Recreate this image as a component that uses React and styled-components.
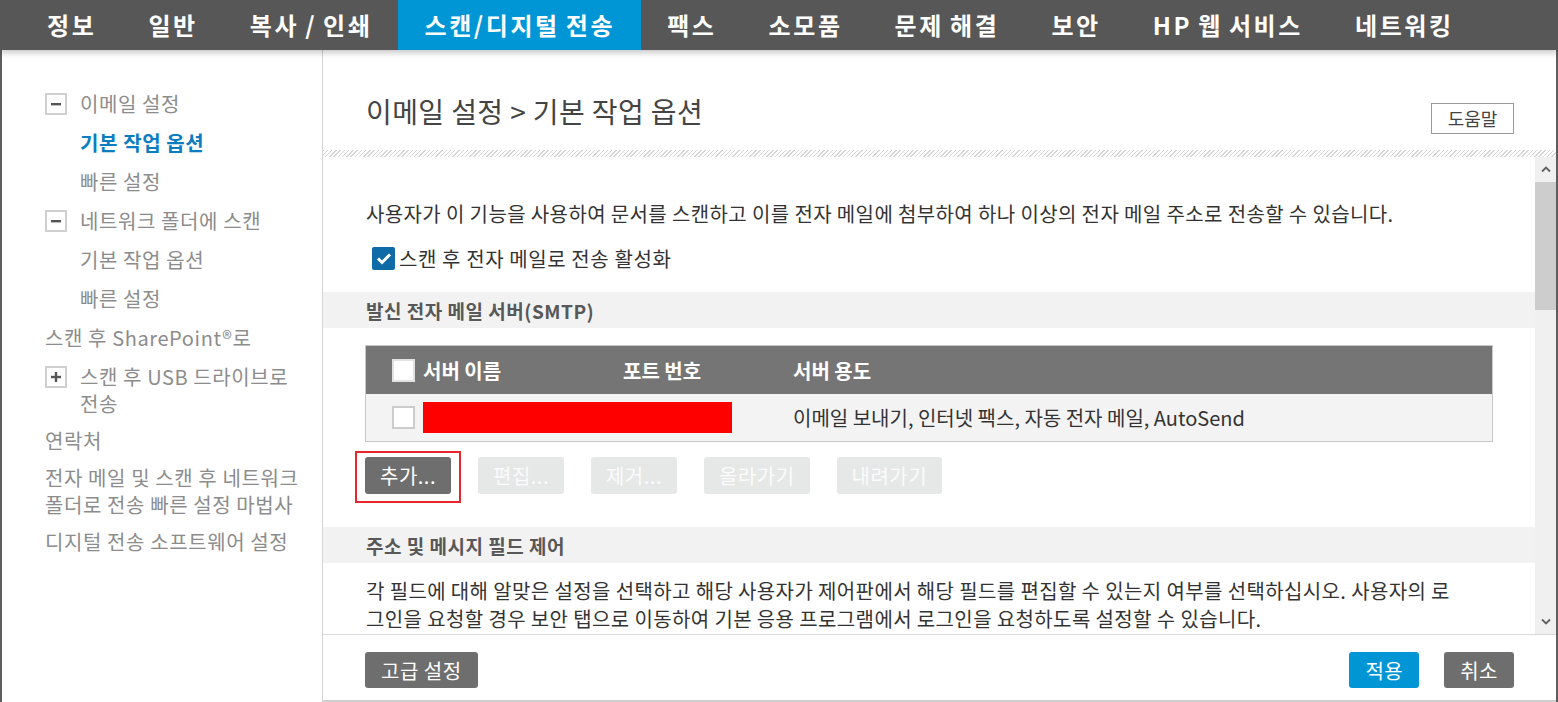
import React from 'react';
import styled, { createGlobalStyle } from 'styled-components';

const GlobalStyle = createGlobalStyle`
  html, body {
    margin: 0;
    padding: 0;
    background: #fff;
  }
  body {
    font-family: "Noto Sans CJK KR", "Noto Sans", sans-serif;
    color: #333;
  }
  * {
    box-sizing: border-box;
  }
`;

const Page = styled.div`
  width: 1558px;
  height: 702px;
  display: flex;
  flex-direction: column;
  overflow: hidden;
`;

const TopNav = styled.nav`
  height: 50px;
  flex: 0 0 50px;
  display: flex;
  padding-left: 21px;
  background: #575757;
  position: relative;
  z-index: 2;
  box-shadow: 0 3px 6px rgba(0, 0, 0, 0.22);
`;

const Tab = styled.div`
  display: flex;
  align-items: center;
  padding: 0 26px 2px 26px;
  font-size: 24px;
  font-weight: 700;
  letter-spacing: 2.6px;
  word-spacing: -2px;
  color: #fff;
  white-space: nowrap;
  background: ${(p) => (p.$active ? '#0096d6' : 'transparent')};
`;

const Body = styled.div`
  flex: 1;
  display: flex;
  min-height: 0;
`;

const Sidebar = styled.aside`
  width: 323px;
  flex: 0 0 323px;
  border-left: 2px solid #5e5e5e;
  border-right: 1px solid #d4d4d4;
  padding: 40px 10px 0 43px;
`;

const SideItem = styled.div`
  display: flex;
  align-items: flex-start;
  padding-left: ${(p) => (p.$indent ? '35px' : '0')};
  margin-bottom: ${(p) => (p.$tight ? 10 : 12)}px;
  font-size: 20px;
  letter-spacing: 0.6px;
  line-height: 27px;
  white-space: nowrap;
  color: ${(p) => (p.$active ? '#0c7dbf' : '#8c8c8c')};
  font-weight: ${(p) => (p.$active ? 700 : 400)};
`;

const ToggleBox = styled.span`
  width: 22px;
  height: 22px;
  flex: 0 0 22px;
  margin: 3px 13px 0 0;
  border: 2px solid #cfcfcf;
  display: flex;
  align-items: center;
  justify-content: center;
`;

const Main = styled.main`
  flex: 1;
  display: flex;
  flex-direction: column;
  min-width: 0;
  border-right: 2px solid #5e5e5e;
`;

const MainHeader = styled.header`
  height: 100px;
  flex: 0 0 100px;
  display: flex;
  justify-content: space-between;
  align-items: flex-start;
  padding: 42px 42px 0 43px;
`;

const Title = styled.h1`
  margin: 0;
  font-size: 28px;
  letter-spacing: 0.4px;
  line-height: 38px;
  font-weight: 400;
  color: #444;
`;

const HelpButton = styled.button`
  margin-top: 11px;
  width: 83px;
  height: 31px;
  border: 1px solid #9a9a9a;
  background: #fff;
  font-family: inherit;
  font-size: 18px;
  line-height: 29px;
  color: #444;
  padding: 0;
`;

const Hatch = styled.div`
  height: 7px;
  flex: 0 0 7px;
  background: repeating-linear-gradient(135deg, #d6d6d6 0 1px, #fff 1px 3px);
`;

const ContentRow = styled.div`
  flex: 1;
  display: flex;
  min-height: 0;
`;

const ScrollArea = styled.div`
  flex: 1;
  overflow: hidden;
  padding-top: 43px;
`;

const ScrollBar = styled.div`
  width: 21px;
  flex: 0 0 21px;
  background: #f0f0f0;
  display: flex;
  flex-direction: column;
`;

const ScrollArrow = styled.div`
  height: 25px;
  flex: 0 0 25px;
  display: flex;
  align-items: center;
  justify-content: center;
`;

const ScrollThumb = styled.div`
  height: 128px;
  flex: 0 0 128px;
  background: #cdcdcd;
`;

const ScrollTrack = styled.div`
  flex: 1;
`;

const Para = styled.p`
  margin: ${(p) => p.$top || 0}px 42px 0 43px;
  font-size: 20px;
  letter-spacing: 0.38px;
  line-height: 28px;
  color: #333;
  white-space: nowrap;
`;

const CheckRow = styled.label`
  display: flex;
  align-items: center;
  gap: 4px;
  height: 28px;
  margin: 16px 0 0 49px;
  font-size: 20px;
  letter-spacing: 0.6px;
  color: #333;
`;

const CheckedBox = styled.span`
  width: 23px;
  height: 23px;
  background: #0e6ba8;
  border-radius: 2px;
  display: flex;
  align-items: center;
  justify-content: center;
`;

const Band = styled.h2`
  margin: ${(p) => p.$top}px 0 0 0;
  height: 36px;
  display: flex;
  align-items: center;
  padding-left: 43px;
  background: #f2f2f2;
  font-size: 19px;
  letter-spacing: 0.5px;
  font-weight: 700;
  color: #585858;
`;

const Table = styled.div`
  margin: 17px 42px 0 42px;
  border: 1px solid #c8c8c8;
`;

const TableRow = styled.div`
  display: grid;
  grid-template-columns: 31px 200px 170px 1fr;
  align-items: center;
  padding-left: 26px;
  height: ${(p) => (p.$head ? 48 : 47)}px;
  background: ${(p) => (p.$head ? '#757575' : '#f3f3f3')};
  color: ${(p) => (p.$head ? '#fff' : '#333')};
  font-size: 20px;
  font-weight: ${(p) => (p.$head ? 700 : 400)};
  white-space: nowrap;
`;

const Box = styled.span`
  width: 23px;
  height: 23px;
  background: #fff;
  border: 2px solid ${(p) => (p.$head ? '#e2e2e2' : '#cccccc')};
`;

const Redacted = styled.span`
  display: block;
  width: 309px;
  height: 31px;
  background: #ff0000;
`;

const ButtonRow = styled.div`
  display: flex;
  gap: 27px;
  margin: 15px 0 0 42px;
`;

const Btn = styled.button`
  position: relative;
  height: ${(p) => p.$h || 37}px;
  padding: 0 ${(p) => p.$pad || 15}px;
  border: none;
  border-radius: 3px;
  font-family: inherit;
  font-size: 20px;
  letter-spacing: 0.5px;
  white-space: nowrap;
  color: ${(p) => (p.$disabled ? '#fbfbfb' : '#fff')};
  background: ${(p) =>
    p.$disabled ? '#e6e8e8' : p.$primary ? '#0096d6' : '#6e6e6e'};
`;

const Highlight = styled.span`
  position: absolute;
  top: -6px;
  bottom: -9px;
  left: -10px;
  right: -10px;
  border: 2px solid #e8252b;
  pointer-events: none;
`;

const Footer = styled.footer`
  height: 68px;
  flex: 0 0 68px;
  display: flex;
  justify-content: space-between;
  align-items: flex-start;
  padding: 17px 42px 0 42px;
  border-top: 1px solid #d9d9d9;
  border-bottom: 2px solid #cfcfcf;
`;

const FooterGroup = styled.div`
  display: flex;
  gap: 25px;
`;

const Minus = () => (
  <svg width="12" height="12" viewBox="0 0 12 12">
    <rect x="1" y="5" width="10" height="2.4" fill="#555" />
  </svg>
);

const Plus = () => (
  <svg width="12" height="12" viewBox="0 0 12 12">
    <rect x="1" y="4.8" width="10" height="2.4" fill="#555" />
    <rect x="4.8" y="1" width="2.4" height="10" fill="#555" />
  </svg>
);

const Chevron = ({ down }) => (
  <svg width="10" height="7" viewBox="0 0 10 7">
    <polyline
      points={down ? '1,1.5 5,5.5 9,1.5' : '1,5.5 5,1.5 9,5.5'}
      fill="none"
      stroke="#606060"
      strokeWidth="1.8"
    />
  </svg>
);

const tabs = ['정보', '일반', '복사 / 인쇄', '스캔/디지털 전송', '팩스', '소모품', '문제 해결', '보안', 'HP 웹 서비스', '네트워킹'];

export default function App() {
  return (
    <>
      <GlobalStyle />
      <Page>
        <TopNav>
          {tabs.map((t) => (
            <Tab key={t} $active={t === '스캔/디지털 전송'}>{t}</Tab>
          ))}
        </TopNav>
        <Body>
          <Sidebar>
            <SideItem><ToggleBox><Minus /></ToggleBox>이메일 설정</SideItem>
            <SideItem $indent $active>기본 작업 옵션</SideItem>
            <SideItem $indent>빠른 설정</SideItem>
            <SideItem><ToggleBox><Minus /></ToggleBox>네트워크 폴더에 스캔</SideItem>
            <SideItem $indent>기본 작업 옵션</SideItem>
            <SideItem $indent>빠른 설정</SideItem>
            <SideItem>스캔 후 SharePoint®로</SideItem>
            <SideItem $tight><ToggleBox><Plus /></ToggleBox><span>스캔 후 USB 드라이브로<br />전송</span></SideItem>
            <SideItem $tight>연락처</SideItem>
            <SideItem $tight><span>전자 메일 및 스캔 후 네트워크<br />폴더로 전송 빠른 설정 마법사</span></SideItem>
            <SideItem>디지털 전송 소프트웨어 설정</SideItem>
          </Sidebar>
          <Main>
            <MainHeader>
              <Title>이메일 설정 &gt; 기본 작업 옵션</Title>
              <HelpButton>도움말</HelpButton>
            </MainHeader>
            <Hatch />
            <ContentRow>
              <ScrollArea>
                <Para>사용자가 이 기능을 사용하여 문서를 스캔하고 이를 전자 메일에 첨부하여 하나 이상의 전자 메일 주소로 전송할 수 있습니다.</Para>
                <CheckRow>
                  <CheckedBox>
                    <svg width="16" height="13" viewBox="0 0 16 13">
                      <polyline points="2,6.5 6,10.5 14,2.5" fill="none" stroke="#fff" strokeWidth="3" />
                    </svg>
                  </CheckedBox>
                  스캔 후 전자 메일로 전송 활성화
                </CheckRow>
                <Band $top={20}>발신 전자 메일 서버(SMTP)</Band>
                <Table>
                  <TableRow $head>
                    <Box $head />
                    <span>서버 이름</span>
                    <span>포트 번호</span>
                    <span>서버 용도</span>
                  </TableRow>
                  <TableRow>
                    <Box />
                    <Redacted />
                    <span />
                    <span>이메일 보내기, 인터넷 팩스, 자동 전자 메일, AutoSend</span>
                  </TableRow>
                </Table>
                <ButtonRow>
                  <Btn>추가...<Highlight /></Btn>
                  <Btn $disabled>편집...</Btn>
                  <Btn $disabled>제거...</Btn>
                  <Btn $disabled>올라가기</Btn>
                  <Btn $disabled>내려가기</Btn>
                </ButtonRow>
                <Band $top={33}>주소 및 메시지 필드 제어</Band>
                <Para $top={14}>
                  각 필드에 대해 알맞은 설정을 선택하고 해당 사용자가 제어판에서 해당 필드를 편집할 수 있는지 여부를 선택하십시오. 사용자의 로<br />
                  그인을 요청할 경우 보안 탭으로 이동하여 기본 응용 프로그램에서 로그인을 요청하도록 설정할 수 있습니다.
                </Para>
              </ScrollArea>
              <ScrollBar>
                <ScrollArrow><Chevron /></ScrollArrow>
                <ScrollThumb />
                <ScrollTrack />
                <ScrollArrow><Chevron down /></ScrollArrow>
              </ScrollBar>
            </ContentRow>
            <Footer>
              <Btn $h={36} $pad={16}>고급 설정</Btn>
              <FooterGroup>
                <Btn $h={36} $pad={16} $primary>적용</Btn>
                <Btn $h={36} $pad={16}>취소</Btn>
              </FooterGroup>
            </Footer>
          </Main>
        </Body>
      </Page>
    </>
  );
}
